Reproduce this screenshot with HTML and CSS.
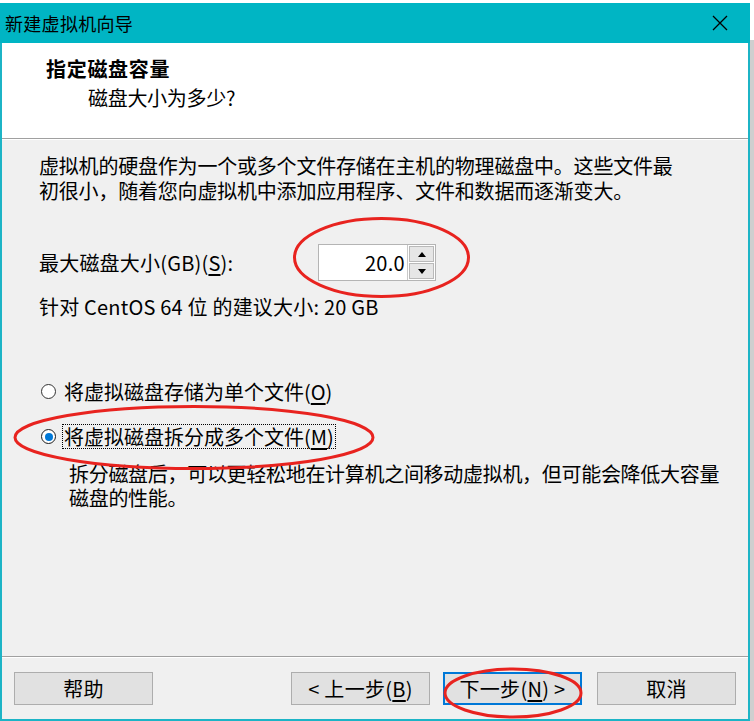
FILE: index.html
```html
<!DOCTYPE html>
<html lang="zh-CN">
<head>
<meta charset="utf-8">
<title>新建虚拟机向导</title>
<link rel="stylesheet" href="styles.css">
</head>
<body>
<div class="page">
  <div class="window">
    <div class="titlebar">
      <span class="title">新建虚拟机向导</span>
      <svg class="close" width="16" height="16" viewBox="0 0 16 16"><path d="M1 1 L15 15 M15 1 L1 15" stroke="#000" stroke-width="1.3" fill="none"/></svg>
    </div>
    <div class="header">
      <div class="h-title">指定磁盘容量</div>
      <div class="h-sub">磁盘大小为多少?</div>
    </div>
    <div class="body">
      <p class="para">虚拟机的硬盘作为一个或多个文件存储在主机的物理磁盘中。这些文件最<br>初很小，随着您向虚拟机中添加应用程序、文件和数据而逐渐变大。</p>
      <div class="size-row">
        <span class="size-label">最大磁盘大小(GB)(<u>S</u>):</span>
        <div class="spin">
          <div class="spin-input">20.0</div>
          <div class="spin-btns">
            <div class="spin-btn"><svg width="8" height="5" viewBox="0 0 8 5"><path d="M0 5 L4 0 L8 5 Z" fill="#000"/></svg></div>
            <div class="spin-btn"><svg width="8" height="5" viewBox="0 0 8 5"><path d="M0 0 L8 0 L4 5 Z" fill="#000"/></svg></div>
          </div>
        </div>
      </div>
      <p class="recommend">针对 CentOS 64 位 的建议大小: 20 GB</p>
      <div class="radio-row first">
        <span class="radio"></span>
        <span class="radio-label">将虚拟磁盘存储为单个文件(<u>O</u>)</span>
      </div>
      <div class="radio-row">
        <span class="radio checked"></span>
        <span class="radio-label focus">将虚拟磁盘拆分成多个文件(<u>M</u>)</span>
      </div>
      <p class="desc">拆分磁盘后，可以更轻松地在计算机之间移动虚拟机，但可能会降低大容量<br>磁盘的性能。</p>
    </div>
    <div class="footer">
      <button class="btn">帮助</button>
      <div class="spacer"></div>
      <button class="btn">&lt; 上一步(<u>B</u>)</button>
      <button class="btn primary">下一步(<u>N</u>) &gt;</button>
      <button class="btn cancel">取消</button>
    </div>
  </div>
  <div class="side"></div>
  <svg class="marks" width="754" height="721" viewBox="0 0 754 721">
    <ellipse cx="381.5" cy="257.5" rx="87" ry="39" fill="none" stroke="#e8231f" stroke-width="3"/>
    <ellipse cx="194" cy="437.5" rx="179" ry="31" fill="none" stroke="#e8231f" stroke-width="3"/>
    <ellipse cx="513" cy="693" rx="68" ry="24" fill="none" stroke="#e8231f" stroke-width="3"/>
  </svg>
</div>
</body>
</html>
```
FILE: styles.css
```css
* { box-sizing: border-box; }
html, body {
  margin: 0;
  padding: 0;
  background: #ffffff;
}
body {
  font-family: "Noto Sans CJK SC", sans-serif;
  font-size: 20px;
  color: #000;
}
.page {
  position: relative;
  width: 754px;
  height: 721px;
  display: flex;
  overflow: hidden;
}
.window {
  width: 750px;
  height: 718px;
  margin-top: 3px;
  display: flex;
  flex-direction: column;
  border-left: 2px solid #1cb4c6;
  border-right: 2px solid #1cb4c6;
  border-bottom: 2px solid #1cb4c6;
}
.side {
  width: 4px;
  margin-top: 40px;
  height: 681px;
  background: #cfcfcf;
}
.titlebar {
  height: 40px;
  flex: 0 0 40px;
  background: #00b5c4;
  display: flex;
  align-items: center;
  justify-content: space-between;
  margin: 0 -2px;
  padding: 0 22px 0 5px;
}
.title {
  font-size: 18px;
  line-height: 24px;
  letter-spacing: 0.3px;
}
.close { display: block; }
.header {
  flex: 0 0 96px;
  background: #fff;
  padding: 13px 0 0 44px;
  border-bottom: 1px solid #a0a0a0;
  box-shadow: 0 1px 0 #ffffff;
}
.h-title {
  font-weight: bold;
  line-height: 25px;
  letter-spacing: 0.7px;
}
.h-sub {
  margin: 4px 0 0 42px;
  line-height: 25px;
  letter-spacing: -0.3px;
}
.body {
  flex: 1 1 auto;
  background: #f0f0f0;
  margin-top: 1px;
  padding: 13px 0 0 37px;
}
.para {
  margin: 0;
  line-height: 25px;
  letter-spacing: -0.2px;
}
.size-row {
  display: flex;
  align-items: center;
  margin-top: 41px;
  height: 37px;
}
.size-label {
  flex: 0 0 279px;
  line-height: 25px;
  letter-spacing: 0.2px;
}
.spin {
  display: flex;
  height: 37px;
  border: 1px solid #b4b4b4;
  background: #fff;
}
.spin-input {
  width: 89px;
  text-align: right;
  padding-right: 2px;
  line-height: 35px;
  border-right: 1px solid #c8c8c8;
  letter-spacing: 0.3px;
}
.spin-btns {
  width: 27px;
  display: flex;
  flex-direction: column;
  gap: 1px;
  padding: 1px;
}
.spin-btn {
  flex: 1;
  background: #e6e6e6;
  border: 1px solid #b9b9b9;
  display: flex;
  align-items: center;
  justify-content: center;
}
.spin-btn svg { display: block; }
.recommend {
  margin: 13px 0 0;
  line-height: 25px;
  letter-spacing: 0.2px;
}
.radio-row {
  display: flex;
  align-items: center;
  height: 25px;
  margin-top: 20px;
}
.radio-row.first { margin-top: 60px; }
.radio {
  width: 15px;
  height: 15px;
  border-radius: 50%;
  border: 1.5px solid #333;
  background: #fff;
  margin: 0 6px 0 2px;
  display: flex;
  align-items: center;
  justify-content: center;
}
.radio.checked { border-color: #1a1a1a; }
.radio.checked::after {
  content: "";
  width: 8px;
  height: 8px;
  border-radius: 50%;
  background: #0078d7;
}
.radio-label {
  line-height: 23px;
  padding: 0 1px;
  border: 1px dotted transparent;
  letter-spacing: 0;
}
.radio-label.focus { border-color: #000; }
.desc {
  margin: 13px 0 0 30px;
  line-height: 24px;
  letter-spacing: -0.3px;
}
.footer {
  flex: 0 0 63px;
  background: #f0f0f0;
  border-top: 1px solid #a0a0a0;
  box-shadow: inset 0 1px 0 #ffffff;
  display: flex;
  align-items: center;
  padding: 0 12px;
}
.spacer { flex: 1; }
.btn {
  width: 139px;
  height: 33px;
  background: #e1e1e1;
  border: 1px solid #adadad;
  font-family: "Noto Sans CJK SC", sans-serif;
  font-size: 20px;
  color: #000;
  padding: 0;
  line-height: 29px;
  margin-left: 13px;
  letter-spacing: 0.3px;
}
.btn:first-child { margin-left: 0; }
.btn.primary { border: 2px solid #0078d7; }
.btn.cancel { margin-left: 15px; }
u { text-underline-offset: 3px; }
.marks {
  position: absolute;
  left: 0;
  top: 0;
  pointer-events: none;
}
```
